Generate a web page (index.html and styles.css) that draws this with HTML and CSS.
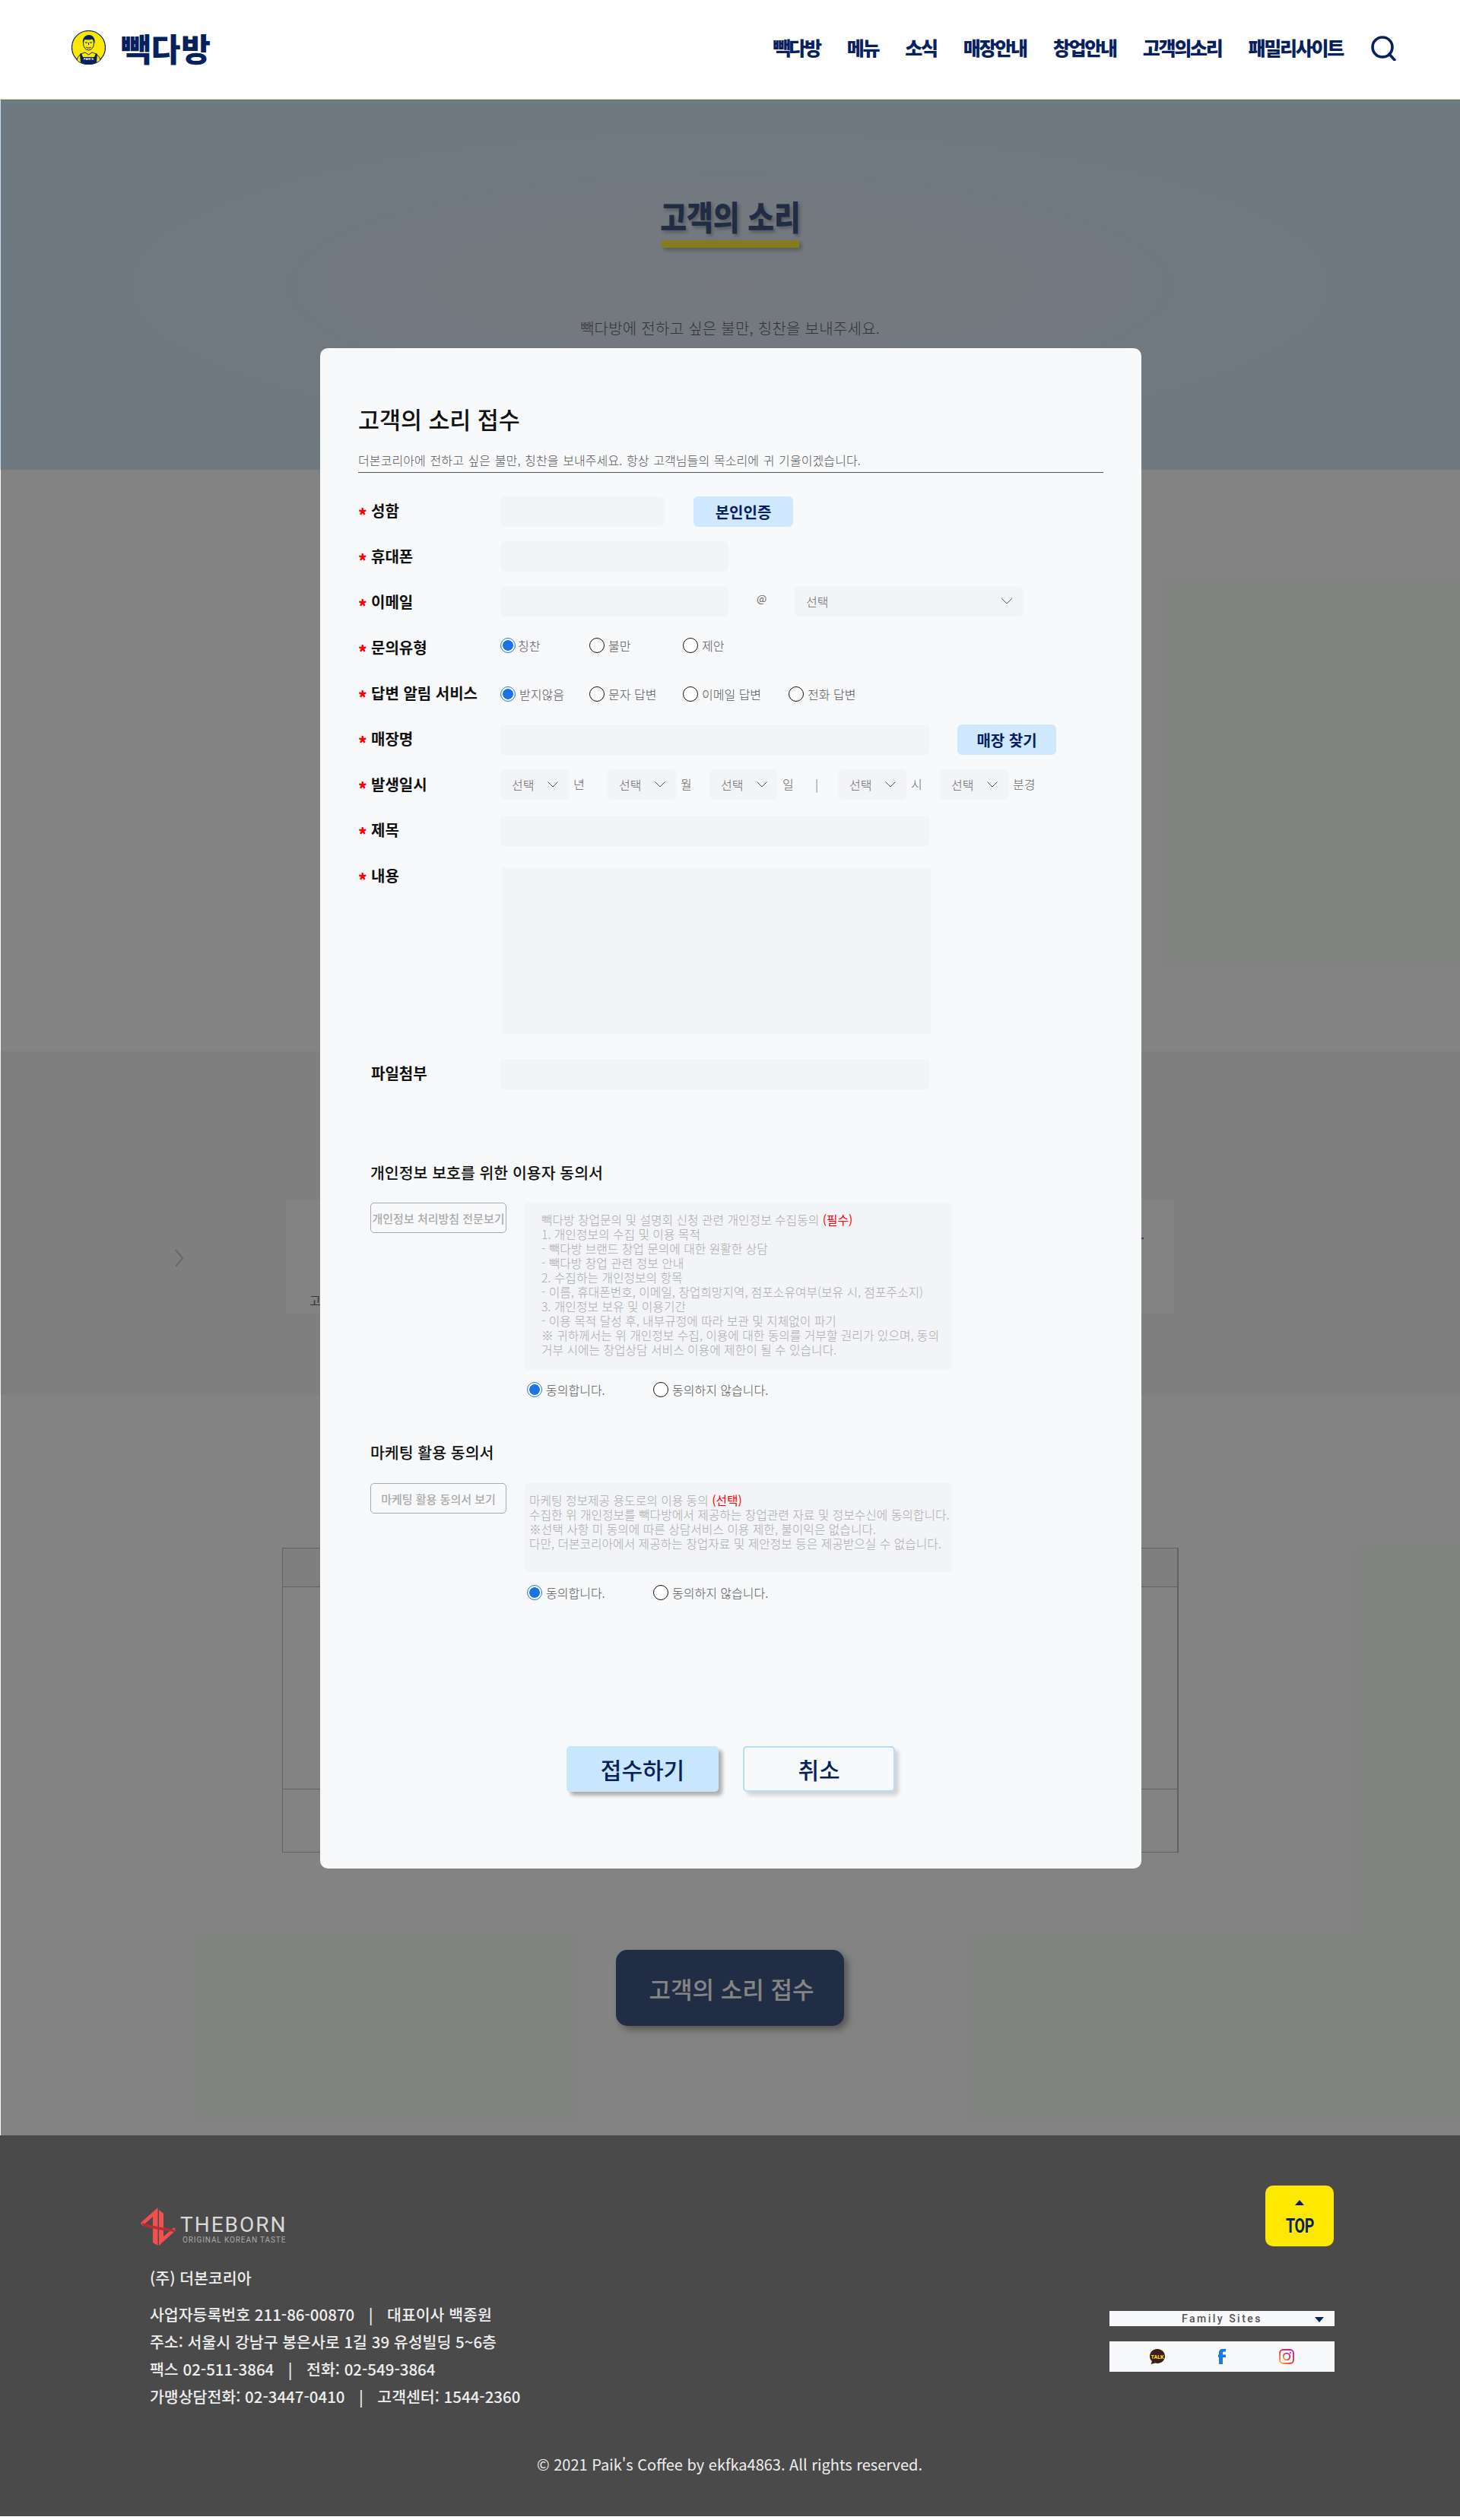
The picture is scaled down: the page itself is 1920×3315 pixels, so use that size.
FILE: index.html
```html
<!DOCTYPE html>
<html lang="ko">
<head>
<meta charset="utf-8">
<title>고객의 소리</title>
<link rel="stylesheet" href="styles.css">
</head>
<body>
<header class="site-header">
  <a class="brand">
    <svg class="brand-mark" viewBox="0 0 45 45">
      <ellipse cx="22.5" cy="22.5" rx="22" ry="22" fill="#fde800" stroke="#07215f" stroke-width="1.2"/>
      <path d="M7 39c2-7 7-9 11-10l4.500 3 4.500-3c4 1 9 3 11 10-4 4-9 5.500-15.500 5.500S11 43 7 39z" fill="#fde800" stroke="#07215f" stroke-width="1"/>
      <path d="M13 30l2 5h15l2-5 2 1-1 11c-3 2-7 2.500-10.500 2.500S15 44 12 42l-1-11z" fill="#07215f"/>
      <ellipse cx="22.500" cy="17" rx="7" ry="9" fill="#fde800" stroke="#07215f" stroke-width="1"/>
      <path d="M15 17c-1-7 3-11 8-11s8.500 4 7.500 11c-1-3-2-5-3-5.500-3 1-7 1-10 .5-1 1-2 3-2.500 5z" fill="#07215f"/>
      <path d="M18 16h3M24 16h3M19 22c2 1.500 5 1.500 7 0M22.500 16v3" stroke="#07215f" stroke-width="1" fill="none"/>
      <text x="22.500" y="39" class="brand-mark-text">PAIK'S</text>
    </svg>
    <span class="brand-name">빽다방</span>
  </a>
  <nav class="main-nav">
    <a>빽다방</a><a>메뉴</a><a>소식</a><a>매장안내</a><a>창업안내</a><a>고객의소리</a><a>패밀리사이트</a>
    <svg class="search-icon" viewBox="0 0 33 33"><circle cx="15" cy="15" r="13" fill="none" stroke="#07215f" stroke-width="3.600"/><path d="M23 23l9 10" stroke="#07215f" stroke-width="3.600" fill="none"/></svg>
  </nav>
</header>

<main class="page">
  <section class="hero">
    <div class="hero-title-wrap">
      <h1 class="hero-title">고객의 소리</h1>
      <div class="hero-bar"></div>
    </div>
    <p class="hero-sub">빽다방에 전하고 싶은 불만, 칭찬을 보내주세요.</p>
  </section>

  <section class="band band-a band-first"></section>

  <section class="band band-b">
    <svg class="band-chevron" viewBox="0 0 11 24"><path d="M1 1l9 11-9 11" fill="none" stroke="#b5b5b5" stroke-width="2"/></svg>
    <div class="band-box">
      <span class="band-box-left">고객의 소리</span>
      <span class="band-box-dash"></span>
      <span class="band-box-right">접수된 글</span>
    </div>
  </section>

  <section class="band band-a band-last">
    <div class="under-table">
      <div class="under-head"></div>
      <div class="under-body"></div>
      <div class="under-row"></div>
    </div>
    <button class="open-button">고객의 소리 접수</button>
  </section>

  <div class="scrim"></div>

  <form class="modal">
    <h2 class="modal-title">고객의 소리 접수</h2>
    <p class="modal-sub">더본코리아에 전하고 싶은 불만, 칭찬을 보내주세요. 항상 고객님들의 목소리에 귀 기울이겠습니다.</p>

    <div class="row">
      <div class="label"><span class="star">*</span>성함</div>
      <div class="controls">
        <div class="field w-215"></div>
        <button type="button" class="soft-button w-131">본인인증</button>
      </div>
    </div>
    <div class="row">
      <div class="label"><span class="star">*</span>휴대폰</div>
      <div class="controls controls-up1"><div class="field w-300"></div></div>
    </div>
    <div class="row">
      <div class="label"><span class="star">*</span>이메일</div>
      <div class="controls controls-up2">
        <div class="field w-300"></div>
        <span class="at">@</span>
        <div class="select w-300"><span>선택</span><svg class="chev" viewBox="0 0 14 8"><path d="M.5.5L7 7l6.500-6.500" fill="none" stroke="#555" stroke-width="1"/></svg></div>
      </div>
    </div>
    <div class="row">
      <div class="label"><span class="star">*</span>문의유형</div>
      <div class="controls radios radios-up">
        <label class="radio r-117"><input type="radio" name="type" checked><span class="tight">칭찬</span></label>
        <label class="radio r-123"><input type="radio" name="type"><span>불만</span></label>
        <label class="radio"><input type="radio" name="type"><span>제안</span></label>
      </div>
    </div>
    <div class="row">
      <div class="label"><span class="star">*</span>답변 알림 서비스</div>
      <div class="controls radios">
        <label class="radio r-117"><input type="radio" name="reply" checked><span>받지않음</span></label>
        <label class="radio r-123"><input type="radio" name="reply"><span>문자 답변</span></label>
        <label class="radio r-139"><input type="radio" name="reply"><span>이메일 답변</span></label>
        <label class="radio"><input type="radio" name="reply"><span>전화 답변</span></label>
      </div>
    </div>
    <div class="row">
      <div class="label"><span class="star">*</span>매장명</div>
      <div class="controls">
        <div class="field w-564"></div>
        <button type="button" class="soft-button store-button">매장 찾기</button>
      </div>
    </div>
    <div class="row">
      <div class="label"><span class="star">*</span>발생일시</div>
      <div class="controls date-controls">
        <div class="select w-90"><span>선택</span><svg class="chev" viewBox="0 0 14 8"><path d="M.5.5L7 7l6.500-6.500" fill="none" stroke="#555" stroke-width="1"/></svg></div>
        <span class="unit u-45">년</span>
        <div class="select w-90"><span>선택</span><svg class="chev" viewBox="0 0 14 8"><path d="M.5.5L7 7l6.500-6.500" fill="none" stroke="#555" stroke-width="1"/></svg></div>
        <span class="unit u-38">월</span>
        <div class="select w-90"><span>선택</span><svg class="chev" viewBox="0 0 14 8"><path d="M.5.5L7 7l6.500-6.500" fill="none" stroke="#555" stroke-width="1"/></svg></div>
        <span class="unit u-43">일</span>
        <span class="unit u-sep">|</span>
        <div class="select w-90"><span>선택</span><svg class="chev" viewBox="0 0 14 8"><path d="M.5.5L7 7l6.500-6.500" fill="none" stroke="#555" stroke-width="1"/></svg></div>
        <span class="unit u-38">시</span>
        <div class="select w-90"><span>선택</span><svg class="chev" viewBox="0 0 14 8"><path d="M.5.5L7 7l6.500-6.500" fill="none" stroke="#555" stroke-width="1"/></svg></div>
        <span class="unit">분경</span>
      </div>
    </div>
    <div class="row">
      <div class="label"><span class="star">*</span>제목</div>
      <div class="controls"><div class="field w-564"></div></div>
    </div>
    <div class="row row-content">
      <div class="label"><span class="star">*</span>내용</div>
      <div class="controls"><div class="textarea"></div></div>
    </div>
    <div class="row">
      <div class="label label-plain">파일첨부</div>
      <div class="controls"><div class="field w-564"></div></div>
    </div>

    <h3 class="consent-title consent-title-first">개인정보 보호를 위한 이용자 동의서</h3>
    <div class="consent">
      <button type="button" class="outline-button">개인정보 처리방침 전문보기</button>
      <div class="consent-box consent-box-long">빽다방 창업문의 및 설명회 신청 관련 개인정보 수집동의 <b class="req">(필수)</b><br>1. 개인정보의 수집 및 이용 목적<br>- 빽다방 브랜드 창업 문의에 대한 원활한 상담<br>- 빽다방 창업 관련 정보 안내<br>2. 수집하는 개인정보의 항목<br>- 이름, 휴대폰번호, 이메일, 창업희망지역, 점포소유여부(보유 시, 점포주소지)<br>3. 개인정보 보유 및 이용기간<br>- 이용 목적 달성 후, 내부규정에 따라 보관 및 지체없이 파기<br>※ 귀하께서는 위 개인정보 수집, 이용에 대한 동의를 거부할 권리가 있으며, 동의<br>거부 시에는 창업상담 서비스 이용에 제한이 될 수 있습니다.</div>
    </div>
    <div class="agree">
      <label class="radio agree-yes"><input type="radio" name="privacy" checked><span>동의합니다.</span></label>
      <label class="radio"><input type="radio" name="privacy"><span>동의하지 않습니다.</span></label>
    </div>

    <h3 class="consent-title consent-title-second">마케팅 활용 동의서</h3>
    <div class="consent consent-second">
      <button type="button" class="outline-button">마케팅 활용 동의서 보기</button>
      <div class="consent-box consent-box-short">마케팅 정보제공 용도로의 이용 동의 <b class="req">(선택)</b><br>수집한 위 개인정보를 빽다방에서 제공하는 창업관련 자료 및 정보수신에 동의합니다.<br>※선택 사항 미 동의에 따른 상담서비스 이용 제한, 불이익은 없습니다.<br>다만, 더본코리아에서 제공하는 창업자료 및 제안정보 등은 제공받으실 수 없습니다.</div>
    </div>
    <div class="agree agree-second">
      <label class="radio agree-yes"><input type="radio" name="marketing" checked><span>동의합니다.</span></label>
      <label class="radio"><input type="radio" name="marketing"><span>동의하지 않습니다.</span></label>
    </div>

    <div class="actions">
      <button type="button" class="action action-submit">접수하기</button>
      <button type="button" class="action action-cancel">취소</button>
    </div>
  </form>
</main>

<footer class="site-footer">
  <div class="footer-top">
    <div class="footer-left">
      <div class="born-logo">
        <svg class="born-mark" viewBox="0 0 46 50">
          <path d="M22.500 0L0 20l2.500 4L16 12v34l6.500 4z" fill="#f25050"/>
          <path d="M24 50l22-20-2-4-14 12V8l-6-5z" fill="#f25050"/>
          <path d="M2 20c12 4 30 7 43 9l-1 3C30 30 14 28 3 24z" fill="#b92c33"/>
        </svg>
        <div class="born-text">
          <div class="born-name">THEBORN</div>
          <div class="born-tag">ORIGINAL KOREAN TASTE</div>
        </div>
      </div>
      <p class="company">(주) 더본코리아</p>
      <p class="company-line">사업자등록번호 211-86-00870 &nbsp;<span class="pipe">|</span>&nbsp; 대표이사 백종원</p>
      <p class="company-line">주소: 서울시 강남구 봉은사로 1길 39 유성빌딩 5~6층</p>
      <p class="company-line">팩스 02-511-3864 &nbsp;<span class="pipe">|</span>&nbsp; 전화: 02-549-3864</p>
      <p class="company-line">가맹상담전화: 02-3447-0410 &nbsp;<span class="pipe">|</span>&nbsp; 고객센터: 1544-2360</p>
    </div>
    <div class="footer-right">
      <a class="top-button"><span class="top-arrow"></span><span class="top-text">TOP</span></a>
      <div class="family"><span>Family Sites</span><i class="family-arrow"></i></div>
      <div class="social">
        <svg class="social-icon" viewBox="0 0 20 20"><path d="M10 0c5.500 0 10 4 10 9.500S15.500 19 10 19c-1 0-2-.1-3-.4L1.500 20l1.400-4C1 14.500 0 12 0 9.500 0 4 4.500 0 10 0z" fill="#3d1c1c"/><text x="10" y="13" class="talk-text">TALK</text></svg>
        <svg class="social-icon" viewBox="0 0 20 20"><path d="M6 20V11H5V7.500h1V5c0-3.500 2-5 4.500-5H15v3.500h-2.500C11.500 3.500 11 4 11 5v2.500h4V11h-4v9z" fill="#1877f2"/></svg>
        <svg class="social-icon" viewBox="0 0 20 20"><defs><linearGradient id="ig" x1="0" y1="1" x2="1" y2="0"><stop offset="0" stop-color="#fdc42c"/><stop offset=".45" stop-color="#f5263c"/><stop offset="1" stop-color="#c01aa0"/></linearGradient></defs><rect x="1" y="1" width="18" height="18" rx="4.500" fill="none" stroke="url(#ig)" stroke-width="1.800"/><circle cx="10" cy="10" r="4.300" fill="none" stroke="url(#ig)" stroke-width="1.800"/><circle cx="15" cy="5" r="1.100" fill="#d3208a"/></svg>
      </div>
    </div>
  </div>
  <p class="copyright">© 2021 Paik's Coffee by ekfka4863. All rights reserved.</p>
</footer>
</body>
</html>
```

FILE: styles.css
```css
* { box-sizing: border-box; }
html, body { margin: 0; padding: 0; background: #fff; }
body {
  font-family: "Noto Sans CJK KR", "Noto Sans", sans-serif;
  color: #333;
  height: 3315px;
}
p, h1, h2, h3 { margin: 0; }
button { font-family: inherit; cursor: pointer; }

/* header */
.site-header {
  height: 131px;
  background: #fff;
  border-bottom: 1px solid #d8e6b6;
  display: flex;
  justify-content: space-between;
  align-items: flex-start;
  padding: 40px 84px 0 94px;
}
.brand { display: flex; align-items: center; height: 45px; }
.brand-mark { width: 45px; height: 45px; }
.brand-mark-text { font: 700 4px "Liberation Sans", sans-serif; fill: #fff; text-anchor: middle; }
.brand-name {
  margin-left: 20px;
  font-size: 42px;
  line-height: 45px;
  font-weight: 900;
  color: #07215f;
  letter-spacing: 1px;
  white-space: nowrap;
}
.main-nav { display: flex; align-items: center; height: 45px; }
.main-nav a {
  font-size: 25px;
  line-height: 45px;
  font-weight: 900;
  color: #07215f;
  margin-right: 35px;
  letter-spacing: -2.250px;
  white-space: nowrap;
}
.main-nav a:nth-of-type(7) { margin-right: 37px; }
.search-icon { width: 33px; height: 33px; margin-top: 1px; }

/* page under the modal */
.page { position: relative; height: 2678px; }
.hero {
  height: 487px;
  border-top: 1px solid #c9cfa0;
  background: radial-gradient(ellipse 60% 60% at 50% 50%, #d6e2ee 0%, #c6e0f8 100%);
  padding-top: 127px;
  text-align: center;
}
.hero-title-wrap { display: inline-block; width: 181px; }
.hero-title {
  display: flex;
  justify-content: center;
  font-size: 44px;
  line-height: 50px;
  font-weight: 900;
  color: #07215f;
  transform: scaleX(.86);
  text-shadow: 3px 3px 5px rgba(0,0,0,.35);
  white-space: nowrap;
}
.hero-bar { height: 10px; margin-top: 7px; background: #fde800; box-shadow: 3px 3px 5px rgba(0,0,0,.35); }
.hero-sub { margin-top: 91px; font-size: 20px; line-height: 30px; font-weight: 300; letter-spacing: .25px; color: #333; }
.band-a { background: #f7fbf7; }
.band-b { background: #f1f1f1; }
.band-first { height: 765px; }
.band-b { height: 452px; display: flex; align-items: flex-start; padding: 195px 0 0 230px; }
.band-chevron { width: 11px; height: 24px; margin-top: 65px; }
.band-box {
  position: relative;
  width: 1168px;
  height: 150px;
  margin-left: 135px;
  background: #fbfbfb;
}
.band-box-left { position: absolute; left: 31px; bottom: 6px; font-size: 16px; line-height: 24px; color: #333; }
.band-box-dash { position: absolute; right: 40px; top: 50px; width: 4px; height: 2px; background: #a020c0; }
.band-box-right { position: absolute; right: 36px; bottom: 6px; width: 90px; font-size: 16px; line-height: 24px; color: #333; white-space: nowrap; }
.band-last { height: 974px; padding-top: 201px; }
.under-table { width: 1179px; margin-left: 371px; height: 401px; border: 1px solid #a8a8a8; border-right-width: 2px; display: flex; flex-direction: column; }
.under-head { height: 51px; background: #f2efef; border-bottom: 1px solid #a8a8a8; }
.under-body { height: 266px; border-bottom: 1px solid #a8a8a8; }
.under-row { flex: 1; }
.open-button {
  display: block;
  width: 300px;
  height: 100px;
  margin: 128px auto 0;
  padding: 0 0 0 4px;
  border: 0;
  border-radius: 15px;
  background: #07215f;
  color: #fff;
  font-size: 31px;
  font-weight: 500;
  box-shadow: 5px 5px 10px rgba(0,0,0,.45);
}
.scrim { position: absolute; inset: 0 0 0 1px; background: rgba(51,51,51,.6); }

/* modal */
.modal {
  position: absolute;
  top: 327px;
  left: 421px;
  width: 1080px;
  height: 2000px;
  padding: 73px 50px 0;
  background: #f8f9fb;
  border-radius: 10px;
}
.modal-title { font-size: 30.400px; line-height: 40px; font-weight: 500; color: #111; }
.modal-sub {
  margin-top: 22px;
  padding-bottom: 4px;
  font-size: 16px;
  line-height: 24px;
  font-weight: 300;
  letter-spacing: .1px;
  word-spacing: 1px;
  color: #555;
  border-bottom: 1px solid #555;
  margin-bottom: 21px;
  white-space: nowrap;
}
.row { display: flex; height: 60px; align-items: flex-start; }
.row-content { height: 260px; }
.label {
  width: 187px;
  flex: none;
  font-size: 20px;
  line-height: 58px;
  font-weight: 700;
  color: #111;
  white-space: nowrap;
}
.label-plain { padding-left: 17px; }
.star { display: inline-block; width: 17px; color: #f00; font-weight: 900; font-size: 22px; line-height: 20px; vertical-align: -6px; }
.controls { display: flex; align-items: flex-start; padding-top: 10px; }
.controls-up1 { padding-top: 9px; }
.controls-up2 { padding-top: 8px; }
.field, .select { height: 40px; background: #f3f4f8; border-radius: 6px; flex: none; }
.w-215 { width: 215px; }
.w-300 { width: 300px; }
.w-564 { width: 564px; }
.w-90 { width: 90px; }
.select {
  display: flex;
  align-items: center;
  justify-content: space-between;
  padding: 0 14px 0 15px;
  font-size: 16px;
  font-weight: 300;
  color: #666;
}
.chev { width: 14px; height: 8px; flex: none; }
.soft-button {
  height: 40px;
  border: 0;
  border-radius: 6px;
  background: #d0e8fd;
  color: #07215f;
  font-size: 20px;
  font-weight: 700;
  padding: 0;
}
.w-131 { width: 131px; margin-left: 39px; }
.store-button { width: 130px; margin-left: 37px; }
.at { width: 87px; text-align: center; font-size: 14px; line-height: 32px; color: #666; flex: none; }
.radios { padding-top: 20px; }
.radios-up { padding-top: 16px; }
.radio { display: flex; align-items: center; gap: 5px; height: 20px; font-size: 16px; line-height: 20px; font-weight: 300; color: #555; white-space: nowrap; }
.radio input {
  appearance: none;
  -webkit-appearance: none;
  width: 20px;
  height: 20px;
  margin: 0;
  flex: none;
  border-radius: 50%;
  border: 1px solid #111;
  background: #fff;
}
.radio input:checked {
  border: 1.500px solid #1a73e8;
  background: radial-gradient(circle, #1a73e8 0, #1a73e8 6.500px, #fff 7.200px);
}
.tight { margin-left: -2px; }
.r-117 { width: 117px; }
.r-123 { width: 123px; }
.r-139 { width: 139px; }
.date-controls { padding-top: 9px; }
.unit { flex: none; font-size: 16px; line-height: 38px; font-weight: 300; color: #666; margin-left: 6px; white-space: nowrap; }
.u-45 { width: 45px; }
.u-38 { width: 38px; }
.u-43 { width: 43px; }
.u-sep { width: 30px; margin-left: 0; }
.textarea { width: 564px; height: 218px; margin: 9px 0 0 2px; background: #f3f4f8; }

/* consent */
.consent-title { font-size: 20.500px; line-height: 30px; font-weight: 500; color: #111; padding-left: 16px; }
.consent-title-first { margin-top: 84px; }
.consent-title-second { margin-top: 57px; }
.consent { display: flex; align-items: flex-start; margin-top: 25px; padding-left: 16px; }
.consent-second { margin-top: 26px; }
.outline-button {
  width: 179px;
  height: 40px;
  flex: none;
  padding: 0;
  border: 1px solid #aaa;
  border-radius: 5px;
  background: transparent;
  color: #aaa;
  font-size: 15px;
  font-weight: 500;
  white-space: nowrap;
}
.consent-box {
  width: 562px;
  margin-left: 24px;
  padding-top: 13px;
  background: #f3f4f8;
  border-radius: 5px;
  font-size: 15.800px;
  line-height: 19px;
  font-weight: 300;
  color: #aaa;
  white-space: nowrap;
}
.consent-box-long { height: 220px; padding-left: 22px; }
.consent-box-short { height: 117px; padding-left: 6px; }
.req { color: #f00; font-weight: 400; }
.agree { display: flex; margin-top: 16px; padding-left: 222px; }
.agree-second { margin-top: 17px; }
.agree-yes { width: 166px; }
.actions { display: flex; gap: 32px; margin-top: 192px; padding-left: 274px; }
.action { width: 200px; height: 60px; border-radius: 5px; color: #07215f; font-size: 30px; font-weight: 500; padding: 0; box-shadow: 5px 5px 5px rgba(0,0,0,.3); }
.action-submit { background: #c8e6fd; border: 0; }
.action-cancel { background: #f8f9fb; border: 2px solid #b5def9; box-shadow: 5px 5px 5px rgba(0,0,0,.15); }

/* footer */
.site-footer { height: 501px; background: #4a4a4a; padding: 66px 165px 0 185px; color: #eee; }
.footer-top { display: flex; justify-content: space-between; align-items: flex-start; height: 345px; }
.footer-left { padding-top: 29px; }
.born-logo { display: flex; height: 50px; }
.born-mark { width: 46px; height: 50px; flex: none; }
.born-text { margin-left: 6px; width: 140px; }
.born-name { font: 400 28px/29px "Roboto", sans-serif; color: #d9d9d9; letter-spacing: 2px; margin-top: 8px; white-space: nowrap; }
.born-tag { font: 400 10px/12px "Roboto", sans-serif; color: #aaa; letter-spacing: .9px; margin: 0 0 0 3px; white-space: nowrap; }
.company { margin: 27px 0 0 12px; padding-bottom: 1px; font-size: 20.500px; line-height: 30px; font-weight: 500; }
.company-line { margin: 14px 0 -14px 12px; font-size: 20.500px; line-height: 36px; font-weight: 500; white-space: nowrap; }
.pipe { margin: 0 7px; }
.footer-right { width: 296px; display: flex; flex-direction: column; }
.top-button { width: 90px; height: 80px; margin-left: 205px; background: #fde800; border-radius: 10px; display: flex; flex-direction: column; align-items: center; }
.top-arrow { width: 0; height: 0; margin-top: 19px; border-left: 6px solid transparent; border-right: 6px solid transparent; border-bottom: 7px solid #07215f; }
.top-text { margin-top: 13px; font: 700 26px/28px "Roboto", sans-serif; color: #07215f; letter-spacing: -.5px; transform: scaleX(.75); }
.family { position: relative; height: 20px; margin-top: 85px; background: #f8f9fb; font: 500 14px/20px "Roboto", sans-serif; color: #555; letter-spacing: 2.500px; text-align: center; }
.family-arrow { position: absolute; right: 14px; top: 8px; width: 0; height: 0; border-left: 6px solid transparent; border-right: 6px solid transparent; border-top: 7px solid #07215f; }
.social { height: 40px; margin-top: 20px; background: #f8f9fb; display: flex; align-items: center; padding-left: 53px; gap: 65px; }
.social-icon { width: 20px; height: 20px; flex: none; }
.talk-text { font: 700 7px "Roboto", sans-serif; fill: #fde800; text-anchor: middle; }
.copyright { margin-left: -21px; text-align: center; font-size: 20px; line-height: 30px; color: #eee; white-space: nowrap; margin-top: 7px; font-weight: 400; }
```
